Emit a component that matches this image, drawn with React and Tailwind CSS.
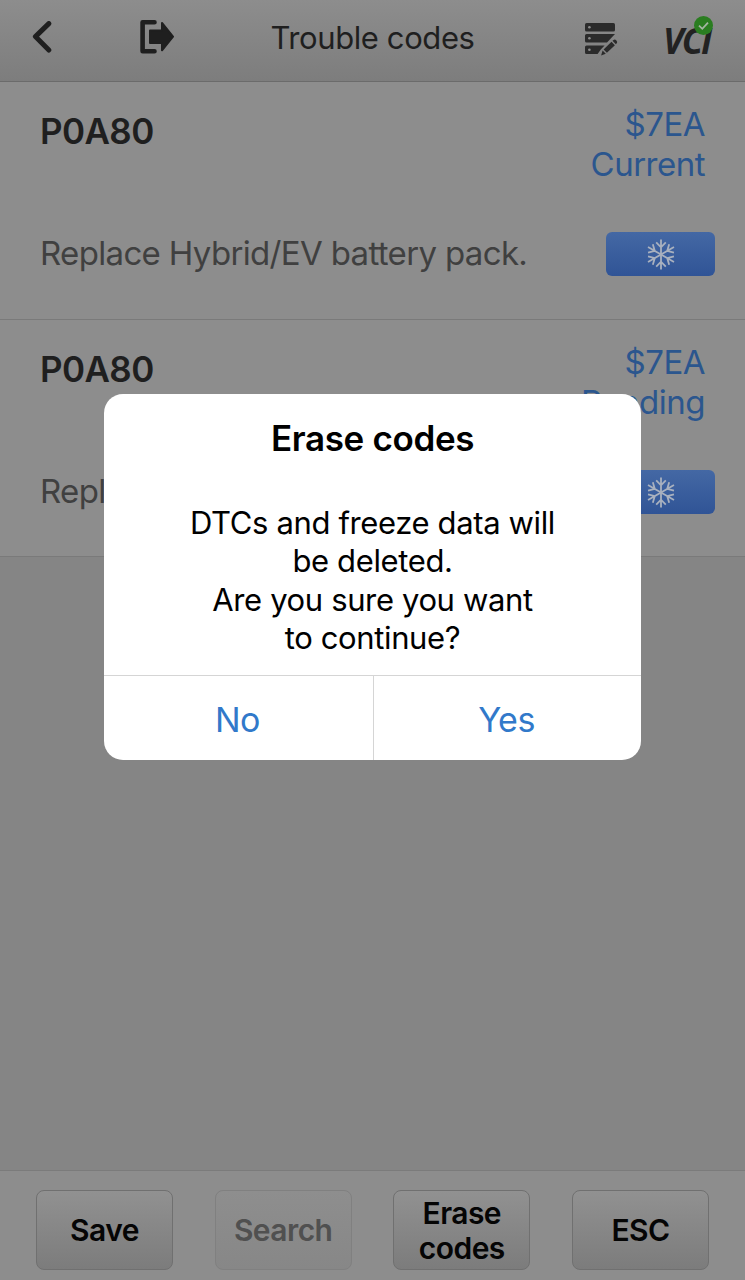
import React from 'react'

const codes = [
  { id: 1, code: 'P0A80', ecu: '$7EA', status: 'Current', description: 'Replace Hybrid/EV battery pack.' },
  { id: 2, code: 'P0A80', ecu: '$7EA', status: 'Pending', description: 'Replace Hybrid/EV battery pack.' },
]

const actions = [
  { label: 'Save' },
  { label: 'Search', disabled: true },
  { label: 'Erase codes' },
  { label: 'ESC' },
]

const BackIcon = () => (
  <svg className="w-5 h-8" viewBox="0 0 20 32" fill="none" stroke="#1f1f1f" strokeWidth="5" strokeLinecap="round" strokeLinejoin="round">
    <path d="M16.8 2.6 L3.4 15.6 L16.8 29" />
  </svg>
)

const ExitIcon = () => (
  <svg className="w-[34px] h-[34px]" viewBox="0 0 34 34" fill="none" stroke="#1f1f1f">
    <path d="M14.5 2.3 H2.6 V31.2 H14.5" strokeWidth="4.6" strokeLinecap="round" strokeLinejoin="round" />
    <path d="M10 10.4 H22 V2.9 L33 16.7 L22 30.3 V22.9 H10 Z" fill="#1f1f1f" strokeWidth="2" strokeLinejoin="round" />
  </svg>
)

const RecordIcon = () => (
  <svg className="w-[33px] h-[33px]" viewBox="0 0 33 33" fill="#2b2b2b">
    <rect width="30" height="8.6" rx="1.6" />
    <path d="M1.6 11 H30 L22 19.6 H1.6 A1.6 1.6 0 0 1 0 18 V12.6 A1.6 1.6 0 0 1 1.6 11 Z" />
    <path d="M1.6 22.4 H19.6 L15.8 26.4 L12.6 31 H1.6 A1.6 1.6 0 0 1 0 29.4 V24 A1.6 1.6 0 0 1 1.6 22.4 Z" />
    <circle cx="4.4" cy="4.3" r="1.3" fill="#8c8c8c" />
    <circle cx="4.4" cy="15.3" r="1.3" fill="#8c8c8c" />
    <circle cx="4.4" cy="26.7" r="1.3" fill="#8c8c8c" />
    <path d="M18.6 26.4 L26.5 18.8 L29.9 22.2 L21.9 29.8 Z M17.6 27.5 L20.8 30.7 L16.1 32.4 Z M27.5 17.8 L28.6 16.9 Q30 16.1 31.4 17.4 Q32.8 18.9 31.9 20.1 L30.9 21.2 Z" />
  </svg>
)

const VciStatus = () => (
  <div className="relative w-[50px] h-[30px]">
    <span className="block font-['Open_Sans',sans-serif] italic font-bold text-[35px] leading-[29px] tracking-[-2px] text-[#222222]">
      VCI
    </span>
    <svg className="absolute -top-[10px] left-[31px] w-[19px] h-[19px]" viewBox="0 0 19 19">
      <circle cx="9.5" cy="9.5" r="9.5" fill="#2a7d20" />
      <path d="M5 9.7 L8.3 12.8 L14 6.7" fill="none" stroke="#a5b5a3" strokeWidth="1.8" />
    </svg>
  </div>
)

const FreezeIcon = () => (
  <svg className="w-[30px] h-[32px]" viewBox="-15 -16.5 30 32" fill="none" stroke="#a9b1bf" strokeWidth="1.8">
    {[0, 60, 120, 180, 240, 300].map((angle) => (
      <path key={angle} transform={`rotate(${angle})`} d="M0 0 V-15 M-4.8 -12.2 L0 -7.2 L4.8 -12.2" />
    ))}
  </svg>
)

const Header = () => (
  <header className="h-[82px] shrink-0 flex items-start pl-[32px] pr-[32px] bg-linear-to-b from-[#8d8d8d] to-[#7d7d7d] border-b border-[#6b6b6b]">
    <button className="mt-[21px]"><BackIcon /></button>
    <button className="mt-[20px] ml-[88px]"><ExitIcon /></button>
    <h1 className="flex-1 pr-[14px] pt-[17px] text-center text-[31px] leading-[42px] tracking-[-0.4px] text-[#1f1f1f]">Trouble codes</h1>
    <button className="mt-[23px]"><RecordIcon /></button>
    <div className="mt-[26px] ml-[45px]"><VciStatus /></div>
  </header>
)

const CodeRow = ({ item }) => (
  <div className="h-[237.5px] pt-[22px] pl-[40px] pr-[30px] bg-[#8d8d8d] border-b border-[#7a7a7a]">
    <div className="flex justify-between pr-[10px] h-[128px]">
      <h2 className="pt-[5px] text-[35px] leading-[44px] tracking-[-0.6px] font-semibold text-[#1f1f1f]">{item.code}</h2>
      <div className="text-right text-[33px] leading-[40px] tracking-[-0.5px] text-[#2b568e]">
        <div>{item.ecu}</div>
        <div>{item.status}</div>
      </div>
    </div>
    <div className="flex justify-between">
      <p className="text-[33px] leading-[42px] tracking-[-0.66px] text-[#404040] whitespace-nowrap">{item.description}</p>
      <button className="w-[109px] h-11 rounded-md flex items-center justify-center bg-linear-to-b from-[#4468a4] to-[#305496]">
        <FreezeIcon />
      </button>
    </div>
  </div>
)

const ActionButton = ({ action }) => (
  <button
    disabled={action.disabled}
    className={`w-[137px] h-20 px-5 pt-px rounded-lg border text-[30px] leading-[35px] tracking-[-0.55px] font-semibold flex items-center justify-center ${
      action.disabled
        ? 'border-[#808080] bg-linear-to-b from-[#8e8e8e] to-[#878787] text-[#505050]'
        : 'border-[#707070] bg-linear-to-b from-[#919191] to-[#7c7c7c] text-[#050505]'
    }`}
  >
    {action.label}
  </button>
)

const EraseDialog = () => (
  <div className="absolute inset-x-0 top-[394px] flex justify-center">
    <div role="dialog" className="w-[537px] h-[366px] rounded-[19px] bg-white overflow-hidden flex flex-col text-center text-black">
      <div className="flex-1 pt-[22px]">
        <h2 className="text-[35px] leading-[44px] tracking-[-0.35px] font-semibold">Erase codes</h2>
        <p className="mt-[44px] text-[31px] leading-[38.3px] tracking-[-0.37px]">
          DTCs and freeze data will<br />
          be deleted.<br />
          Are you sure you want<br />
          to continue?
        </p>
      </div>
      <div className="h-[85px] flex border-t border-[#d5d5d5] text-[34px] tracking-[-0.5px] text-[#3179ca]">
        <button className="w-[270px] pt-0.5 pr-0.5 border-r border-[#d5d5d5]">No</button>
        <button className="flex-1 pt-0.5 pr-0.5">Yes</button>
      </div>
    </div>
  </div>
)

const App = () => (
  <div className="relative w-[745px] h-[1280px] flex flex-col overflow-hidden bg-[#858585] font-[Inter,sans-serif]">
    <Header />
    <main className="flex-1">
      {codes.map((item) => (
        <CodeRow key={item.id} item={item} />
      ))}
    </main>
    <footer className="h-[110px] shrink-0 flex justify-between pt-[19px] px-9 bg-[#8d8d8d] border-t border-[#7b7b7b]">
      {actions.map((action) => (
        <ActionButton key={action.label} action={action} />
      ))}
    </footer>
    <EraseDialog />
  </div>
)

export default App
